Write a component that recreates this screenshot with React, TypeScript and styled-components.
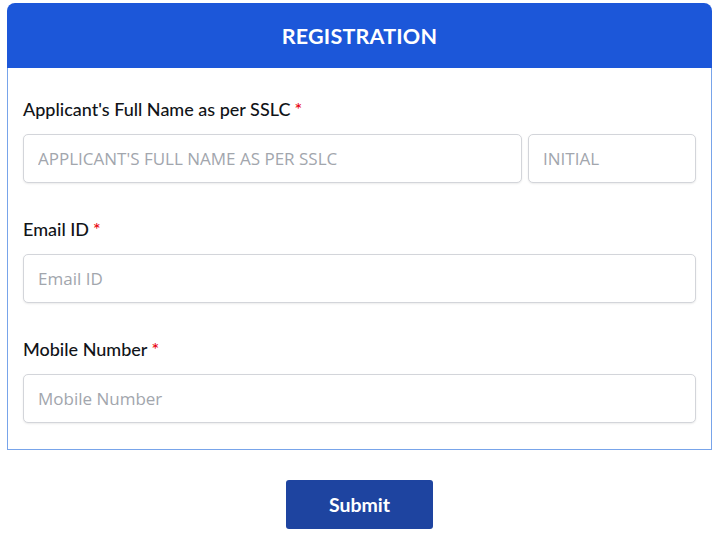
import styled, { createGlobalStyle } from 'styled-components';

const GlobalStyle = createGlobalStyle`
    html, body {
        margin: 0;
        padding: 0;
        background: #ffffff;
    }
    * {
        box-sizing: border-box;
    }
`;

const Page = styled.div`
    padding: 3px 8px 0 7px;
    font-family: Lato, 'Liberation Sans', sans-serif;
`;

const Card = styled.div`
    width: 705px;
    display: flex;
    flex-direction: column;
`;

const Header = styled.div`
    height: 65px;
    background: #1c57d9;
    border-radius: 8px 8px 0 0;
    display: flex;
    align-items: center;
    justify-content: center;
    color: #ffffff;
    font-size: 21.5px;
    font-weight: 700;
    letter-spacing: 0.2px;
`;

const Body = styled.div`
    border: 1px solid #78a4ea;
    border-top: none;
    padding: 30px 15px 26px;
    display: flex;
    flex-direction: column;
    gap: 35px;
`;

const Field = styled.div`
    display: flex;
    flex-direction: column;
    gap: 14px;
`;

const Label = styled.label`
    font-size: 18px;
    line-height: 22px;
    font-weight: 500;
    color: #111418;
`;

const Required = styled.span`
    color: #e8000b;
    margin-left: 4px;
`;

const Row = styled.div`
    display: flex;
    gap: 6px;
`;

const Input = styled.input<{ $fill?: boolean; $width?: number }>`
    height: 49px;
    flex: ${(p) => (p.$width ? `0 0 ${p.$width}px` : p.$fill ? '1 1 0' : 'none')};
    width: ${(p) => (p.$fill || p.$width ? 'auto' : '100%')};
    min-width: 0;
    border: 1px solid #d3d5da;
    border-radius: 5px;
    box-shadow: 0 1px 2px rgba(0, 0, 0, 0.08);
    padding: 0 14px;
    font-family: 'Open Sans', 'Liberation Sans', sans-serif;
    font-size: 17px;
    color: #333;
    outline: none;
    background: #fff;

    &::placeholder {
        color: #a2a6ad;
    }
`;

const Actions = styled.div`
    display: flex;
    justify-content: center;
    padding-top: 30px;
`;

const SubmitButton = styled.button`
    width: 147px;
    height: 49px;
    background: #1e44a0;
    border: none;
    border-radius: 3px;
    color: #ffffff;
    font-family: Lato, 'Liberation Sans', sans-serif;
    font-size: 19.5px;
    font-weight: 700;
    cursor: pointer;
`;

export default function App() {
    return (
        <Page>
            <GlobalStyle />
            <Card>
                <Header>REGISTRATION</Header>
                <Body>
                    <Field>
                        <Label>
                            Applicant's Full Name as per SSLC<Required>*</Required>
                        </Label>
                        <Row>
                            <Input $fill placeholder="APPLICANT'S FULL NAME AS PER SSLC" />
                            <Input $width={168} placeholder="INITIAL" />
                        </Row>
                    </Field>
                    <Field>
                        <Label>
                            Email ID<Required>*</Required>
                        </Label>
                        <Input placeholder="Email ID" />
                    </Field>
                    <Field>
                        <Label>
                            Mobile Number<Required>*</Required>
                        </Label>
                        <Input placeholder="Mobile Number" />
                    </Field>
                </Body>
            </Card>
            <Actions>
                <SubmitButton type="button">Submit</SubmitButton>
            </Actions>
        </Page>
    );
}
